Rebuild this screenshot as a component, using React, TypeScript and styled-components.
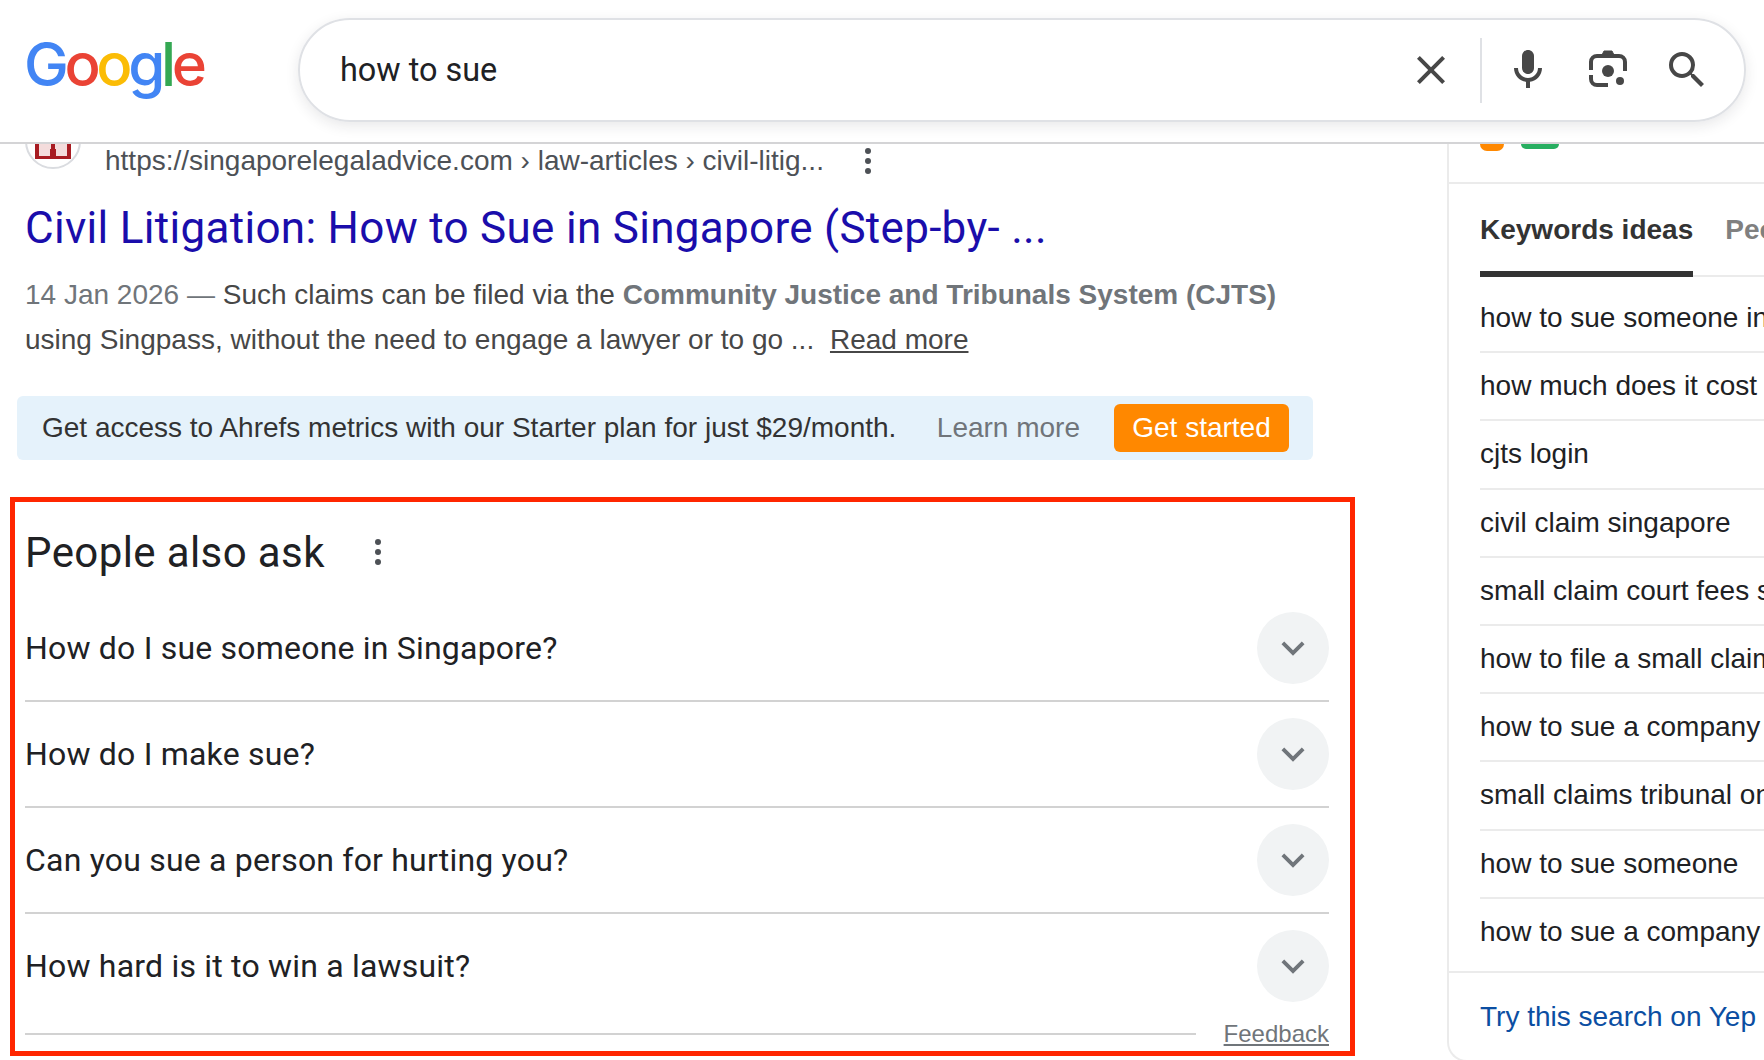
import { FC } from 'react'
import styled, { createGlobalStyle } from 'styled-components'

const GlobalStyle = createGlobalStyle`
  html, body {
    margin: 0;
    padding: 0;
    background: #fff;
    overflow: hidden;
  }
  body {
    font-family: "Liberation Sans", Arial, sans-serif;
  }
`

const Page = styled.div`
  width: 1764px;
  height: 1060px;
  overflow: hidden;
  display: flex;
  flex-direction: column;
`

const Header = styled.header`
  position: relative;
  z-index: 2;
  flex: none;
  height: 142px;
  background: #fff;
  border-bottom: 2px solid #d4d4d6;
  display: flex;
  align-items: flex-start;
`

const Logo = styled.div`
  width: 298px;
  padding: 26px 0 0 24px;
  box-sizing: border-box;
  font-family: Inter, sans-serif;
  font-size: 60px;
  line-height: 76px;
  letter-spacing: -4.4px;
  font-weight: 500;
  white-space: nowrap;
`

const LogoLetter = styled.span<{ $color: string }>`
  color: ${p => p.$color};
`

const SearchBox = styled.div`
  margin-top: 18px;
  width: 1448px;
  height: 104px;
  box-sizing: border-box;
  border: 2px solid #dfe1e5;
  border-radius: 52px;
  box-shadow: 0 4px 14px rgba(32, 33, 36, 0.1);
  display: flex;
  align-items: center;
  padding: 0 18px 0 40px;
`

const Query = styled.div`
  flex: 1;
  font-family: Roboto, sans-serif;
  font-size: 32.4px;
  color: #202124;
`

const IconButton = styled.div<{ $width: number }>`
  width: ${p => p.$width}px;
  display: flex;
  justify-content: center;
  align-items: center;
  color: #474747;
`

const SearchDivider = styled.div`
  width: 2px;
  height: 65px;
  background: #dfe1e5;
  margin: 0 6px 0 19px;
`

const Body = styled.div`
  flex: 1;
  min-height: 0;
  display: grid;
  grid-template-columns: 1447px 317px;
`

const Results = styled.main`
  display: flex;
  flex-direction: column;
  min-width: 0;
`

const Source = styled.div`
  display: flex;
  align-items: center;
  height: 60px;
  margin-top: -13px;
  padding-left: 25px;
`

const Favicon = styled.div`
  width: 56px;
  height: 56px;
  margin-bottom: 40px;
  box-sizing: border-box;
  border-radius: 50%;
  border: 2px solid #dadce0;
  background: #fff;
  display: flex;
  align-items: center;
  justify-content: center;
`

const Url = styled.div`
  margin-left: 24px;
  font-size: 28px;
  color: #4d5156;
  white-space: nowrap;
`

const Kebab = styled.div<{ $left: number }>`
  margin-left: ${p => p.$left}px;
  display: flex;
  flex-direction: column;
  gap: 4px;
`

const KebabDot = styled.span`
  width: 6px;
  height: 6px;
  border-radius: 50%;
  background: #4d5156;
`

const Title = styled.h3`
  margin: 9px 0 0 25px;
  font-family: Roboto, sans-serif;
  font-weight: 400;
  font-size: 44px;
  letter-spacing: 0.3px;
  line-height: 56px;
  color: #1a0dab;
  white-space: nowrap;
`

const Snippet = styled.div`
  margin: 17px 0 0 25px;
  font-size: 28px;
  line-height: 44.5px;
  color: #474747;
  white-space: nowrap;
`

const SnippetDate = styled.span`
  color: #70757a;
`

const SnippetBold = styled.b`
  color: #70757a;
`

const ReadMore = styled.span`
  margin-left: 8px;
  text-decoration: underline;
`

const AdBar = styled.div`
  margin: 34px 0 0 17px;
  width: 1296px;
  height: 64px;
  box-sizing: border-box;
  background: #e5f2fb;
  border-radius: 6px;
  display: flex;
  align-items: center;
  padding: 0 24px 0 25px;
  font-size: 28px;
  color: #333;
  white-space: nowrap;
`

const AdText = styled.div`
  flex: 1;
`

const LearnMore = styled.div`
  color: #70757a;
  margin-right: 34px;
`

const GetStarted = styled.div`
  width: 175px;
  height: 48px;
  background: #ff8800;
  border-radius: 6px;
  color: #fff;
  display: flex;
  align-items: center;
  justify-content: center;
`

const AskBox = styled.section`
  margin: 37px 0 0 10px;
  width: 1345px;
  height: 559px;
  box-sizing: border-box;
  border: 5px solid #ff2600;
  padding: 0 21px 0 10px;
  display: flex;
  flex-direction: column;
`

const AskHeader = styled.div`
  display: flex;
  align-items: center;
  height: 100px;
`

const AskTitle = styled.h2`
  margin: 0;
  font-family: Roboto, sans-serif;
  font-weight: 400;
  font-size: 42px;
  letter-spacing: 0.4px;
  color: #202124;
`

const Question = styled.div<{ $noLine?: boolean }>`
  height: 106px;
  flex: none;
  box-sizing: border-box;
  display: flex;
  align-items: center;
  justify-content: space-between;
  border-bottom: 2px solid ${p => (p.$noLine ? 'transparent' : '#d2d2d2')};
  font-family: Roboto, sans-serif;
  font-size: 32px;
  letter-spacing: 0.2px;
  color: #202124;
`

const Questions = styled.div`
  margin-top: -6px;
`

const Chevron = styled.div`
  width: 72px;
  height: 72px;
  border-radius: 50%;
  background: #f1f3f4;
  color: #70757a;
  display: flex;
  align-items: center;
  justify-content: center;
`

const FeedbackRow = styled.div`
  display: flex;
  align-items: center;
  gap: 28px;
`

const FeedbackLine = styled.div`
  flex: 1;
  height: 2px;
  background: #d2d2d2;
`

const Feedback = styled.div`
  font-size: 24px;
  color: #70757a;
  text-decoration: underline;
`

const Sidebar = styled.aside`
  border-left: 2px solid #ebebeb;
  border-bottom: 2px solid #ebebeb;
  border-bottom-left-radius: 20px;
  height: 918px;
  box-sizing: border-box;
  overflow: hidden;
  display: flex;
  flex-direction: column;
`

const Badges = styled.div`
  height: 40px;
  flex: none;
  box-sizing: border-box;
  border-bottom: 2px solid #ebebeb;
  padding-left: 31px;
  display: flex;
  gap: 17px;
  align-items: flex-start;
`

const Badge = styled.div<{ $color: string; $width: number; $height: number }>`
  width: ${p => p.$width}px;
  height: ${p => p.$height}px;
  background: ${p => p.$color};
  border-radius: 0 0 8px 8px;
`

const Tabs = styled.div`
  margin-left: 31px;
  display: flex;
  gap: 32px;
  height: 93px;
  flex: none;
  box-sizing: border-box;
  border-bottom: 2px solid #ebebeb;
  font-size: 28px;
  font-weight: 700;
  white-space: nowrap;
`

const Tab = styled.div<{ $active?: boolean }>`
  height: 93px;
  box-sizing: border-box;
  padding-top: 30px;
  color: ${p => (p.$active ? '#333' : '#808080')};
  border-bottom: ${p => (p.$active ? '6px solid #333' : 'none')};
`

const Ideas = styled.div`
  margin-left: 31px;
  flex: none;
  padding: 8px 0 4px;
`

const Idea = styled.div`
  height: 68.2px;
  display: flex;
  align-items: center;
  box-sizing: border-box;
  border-bottom: 2px solid #ebebeb;
  font-size: 28px;
  color: #202124;
  white-space: nowrap;

  &:last-child {
    border-bottom-color: transparent;
  }
`

const YepRow = styled.div`
  border-top: 2px solid #ebebeb;
  height: 88px;
  flex: none;
  padding-left: 31px;
  display: flex;
  align-items: center;
  font-size: 28px;
  color: #0b4ea2;
  white-space: nowrap;
`

const googleLetters: [string, string][] = [
  ['G', '#4285f4'],
  ['o', '#ea4335'],
  ['o', '#fbbc05'],
  ['g', '#4285f4'],
  ['l', '#34a853'],
  ['e', '#ea4335'],
]

const questions = [
  'How do I sue someone in Singapore?',
  'How do I make sue?',
  'Can you sue a person for hurting you?',
  'How hard is it to win a lawsuit?',
]

const ideas = [
  'how to sue someone in singapore',
  'how much does it cost to sue someone',
  'cjts login',
  'civil claim singapore',
  'small claim court fees singapore',
  'how to file a small claim in singapore',
  'how to sue a company in singapore',
  'small claims tribunal online',
  'how to sue someone',
  'how to sue a company for negligence',
]

const ClearIcon: FC = () => (
  <svg width="48" height="48" viewBox="0 0 24 24" fill="currentColor">
    <path d="M19 6.41L17.59 5 12 10.59 6.41 5 5 6.41 10.59 12 5 17.59 6.41 19 12 13.41 17.59 19 19 17.59 13.41 12z" />
  </svg>
)

const MicIcon: FC = () => (
  <svg width="48" height="48" viewBox="0 0 24 24" fill="currentColor">
    <path d="M12 14c1.66 0 3-1.34 3-3V5c0-1.66-1.34-3-3-3S9 3.34 9 5v6c0 1.66 1.34 3 3 3z" />
    <path d="M17 11c0 2.76-2.24 5-5 5s-5-2.24-5-5H5c0 3.53 2.61 6.43 6 6.92V21h2v-3.08c3.39-.49 6-3.39 6-6.92h-2z" />
  </svg>
)

const LensIcon: FC = () => (
  <svg width="40" height="40" viewBox="0 0 40 40" fill="none" stroke="currentColor" strokeWidth="4">
    <path d="M3 20v-8a6 6 0 0 1 6-6h22a6 6 0 0 1 6 6v9" />
    <path d="M3 25v4a6 6 0 0 0 6 6h11" />
    <path d="M14 5l2-4h8l2 4z" fill="currentColor" strokeWidth="1" />
    <circle cx="20" cy="21" r="6" fill="currentColor" stroke="none" />
    <circle cx="32" cy="31" r="4" fill="currentColor" stroke="none" />
  </svg>
)

const SearchIcon: FC = () => (
  <svg width="48" height="48" viewBox="0 0 24 24" fill="currentColor">
    <path d="M15.5 14h-.79l-.28-.27A6.471 6.471 0 0 0 16 9.5 6.5 6.5 0 1 0 9.5 16c1.61 0 3.09-.59 4.23-1.57l.27.28v.79l5 4.99L20.49 19l-4.99-5zm-6 0C7.01 14 5 11.99 5 9.5S7.01 5 9.5 5 14 7.01 14 9.5 11.99 14 9.5 14z" />
  </svg>
)

const ExpandIcon: FC = () => (
  <svg width="46" height="46" viewBox="0 0 24 24" fill="currentColor">
    <path d="M16.59 8.59L12 13.17 7.41 8.59 6 10l6 6 6-6z" />
  </svg>
)

const SiteIcon: FC = () => (
  <svg width="36" height="36" viewBox="0 0 36 36">
    <rect width="36" height="36" fill="#a81c22" />
    <path d="M4 21h12v5h-1v7H4z" fill="#f4dcdc" />
    <path d="M32 21H20v5h1v7h11z" fill="#f4dcdc" />
  </svg>
)

const KebabMenu: FC<{ left: number }> = ({ left }) => (
  <Kebab $left={left}>
    <KebabDot />
    <KebabDot />
    <KebabDot />
  </Kebab>
)

const App: FC = () => {
  return (
    <Page>
      <GlobalStyle />
      <Header>
        <Logo>
          {googleLetters.map(([letter, color], i) => (
            <LogoLetter key={i} $color={color}>
              {letter}
            </LogoLetter>
          ))}
        </Logo>
        <SearchBox>
          <Query>how to sue</Query>
          <IconButton $width={60}>
            <ClearIcon />
          </IconButton>
          <SearchDivider />
          <IconButton $width={80}>
            <MicIcon />
          </IconButton>
          <IconButton $width={80}>
            <LensIcon />
          </IconButton>
          <IconButton $width={78}>
            <SearchIcon />
          </IconButton>
        </SearchBox>
      </Header>

      <Body>
        <Results>
          <Source>
            <Favicon>
              <SiteIcon />
            </Favicon>
            <Url>https://singaporelegaladvice.com › law-articles › civil-litig...</Url>
            <KebabMenu left={41} />
          </Source>
          <Title>Civil Litigation: How to Sue in Singapore (Step-by- ...</Title>
          <Snippet>
            <SnippetDate>14 Jan 2026 — </SnippetDate>Such claims can be filed via the{' '}
            <SnippetBold>Community Justice and Tribunals System (CJTS)</SnippetBold>
            <br />
            using Singpass, without the need to engage a lawyer or to go ...{' '}
            <ReadMore>Read more</ReadMore>
          </Snippet>
          <AdBar>
            <AdText>Get access to Ahrefs metrics with our Starter plan for just $29/month.</AdText>
            <LearnMore>Learn more</LearnMore>
            <GetStarted>Get started</GetStarted>
          </AdBar>
          <AskBox>
            <AskHeader>
              <AskTitle>People also ask</AskTitle>
              <KebabMenu left={50} />
            </AskHeader>
            <Questions>
              {questions.map((q, i) => (
                <Question key={q} $noLine={i === questions.length - 1}>
                  {q}
                  <Chevron>
                    <ExpandIcon />
                  </Chevron>
                </Question>
              ))}
            </Questions>
            <FeedbackRow>
              <FeedbackLine />
              <Feedback>Feedback</Feedback>
            </FeedbackRow>
          </AskBox>
        </Results>

        <Sidebar>
          <Badges>
            <Badge $color="#ff8800" $width={24} $height={7} />
            <Badge $color="#27ae60" $width={38} $height={5} />
          </Badges>
          <Tabs>
            <Tab $active>Keywords ideas</Tab>
            <Tab>People also search</Tab>
          </Tabs>
          <Ideas>
            {ideas.map(idea => (
              <Idea key={idea}>{idea}</Idea>
            ))}
          </Ideas>
          <YepRow>Try this search on Yep</YepRow>
        </Sidebar>
      </Body>
    </Page>
  )
}

export default App
